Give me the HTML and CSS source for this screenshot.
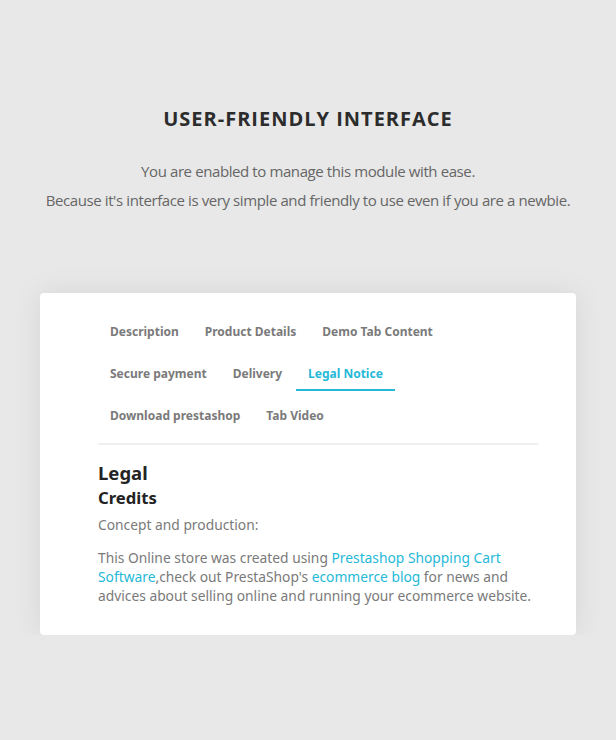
FILE: index.html
```html
<!doctype html>
<html lang="en">
  <head>
    <meta charset="UTF-8" />
    <meta name="viewport" content="width=device-width, initial-scale=1.0" />
    <title>User-friendly interface</title>
    <link rel="stylesheet" href="styles.css">
  </head>
  <body>
    <section class="intro">
      <h2>User-friendly interface</h2>
      <p>You are enabled to manage this module with ease.</p>
      <p>Because it's interface is very simple and friendly to use even if you are a newbie.</p>
    </section>

    <div class="card">
      <ul class="tabs">
        <li><a href="#">Description</a></li>
        <li><a href="#">Product Details</a></li>
        <li><a href="#">Demo Tab Content</a></li>
        <li class="break"></li>
        <li><a href="#">Secure payment</a></li>
        <li><a href="#">Delivery</a></li>
        <li><a href="#" class="active">Legal Notice</a></li>
        <li class="break"></li>
        <li><a href="#">Download prestashop</a></li>
        <li><a href="#">Tab Video</a></li>
      </ul>

      <div class="tab-content">
        <h3>Legal</h3>
        <h4>Credits</h4>
        <p class="lead">Concept and production:</p>
        <p>
          This Online store was created using
          <a href="#">Prestashop Shopping Cart Software</a>,check out
          PrestaShop's <a href="#">ecommerce blog</a> for news and advices
          about selling online and running your ecommerce website.
        </p>
      </div>
    </div>
  </body>
</html>
```

FILE: styles.css
```css
* {
  margin: 0;
  padding: 0;
  box-sizing: border-box;
}

body {
  background: #e8e8e8;
  font-family: "Open Sans", "Noto Sans", sans-serif;
  padding: 107px 40px 0;
}

.intro {
  text-align: center;
  color: #666;
}

.intro h2 {
  font-size: 20px;
  line-height: 24px;
  font-weight: 700;
  letter-spacing: 1px;
  text-transform: uppercase;
  color: #2c2c2c;
  margin-bottom: 26px;
}

.intro p {
  font-size: 15px;
  line-height: 29px;
  font-weight: 400;
  letter-spacing: -0.4px;
}

.card {
  margin-top: 78px;
  width: 536px;
  background: #fff;
  border-radius: 4px;
  box-shadow: 0 0 30px rgba(0, 0, 0, 0.08);
  padding: 14px 38px 30px 58px;
}

.tabs {
  list-style: none;
  display: flex;
  flex-wrap: wrap;
  column-gap: 2px;
  border-bottom: 2px solid #f0f0f0;
  padding-bottom: 10px;
}

.tabs .break {
  flex-basis: 100%;
  height: 0;
}

.tabs a {
  display: block;
  padding: 16px 12px 6px;
  font-family: "Noto Sans", sans-serif;
  font-size: 12px;
  line-height: 18px;
  font-weight: 700;
  color: #7a7a7a;
  text-decoration: none;
  border-bottom: 2px solid transparent;
}

.tabs a.active {
  color: #25b9d7;
  border-bottom-color: #25b9d7;
}

.tab-content {
  font-family: "Noto Sans", sans-serif;
  color: #7a7a7a;
}

.tab-content h3 {
  margin-top: 16px;
  font-size: 18.5px;
  line-height: 24px;
  font-weight: 700;
  color: #232323;
}

.tab-content h4 {
  margin-top: 2px;
  font-size: 16.7px;
  line-height: 22px;
  font-weight: 700;
  color: #232323;
}

.tab-content p {
  font-size: 13.8px;
  line-height: 19px;
}

.tab-content .lead {
  margin: 6px 0 14px;
}

.tab-content a {
  color: #25b9d7;
  text-decoration: none;
}
```
